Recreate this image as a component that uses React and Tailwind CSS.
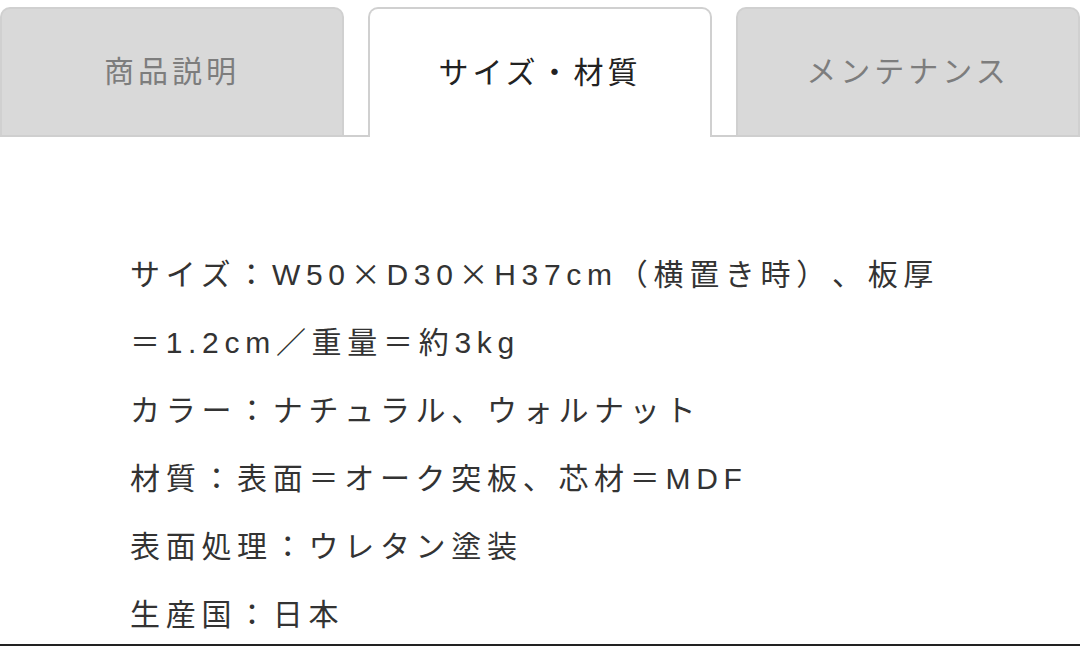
const tabs = [
  { label: '商品説明', active: false },
  { label: 'サイズ・材質', active: true },
  { label: 'メンテナンス', active: false },
];

const specs = [
  'サイズ：W50×D30×H37cm（横置き時）、板厚＝1.2cm／重量＝約3kg',
  'カラー：ナチュラル、ウォルナット',
  '材質：表面＝オーク突板、芯材＝MDF',
  '表面処理：ウレタン塗装',
  '生産国：日本',
];

// × should come from the CJK font (full width), like the original page
const SpecLine = ({ text }) => (
  <p>
    {text.split(/(×)/).map((part, i) =>
      part === '×' ? (
        <span key={i} style={{ fontFamily: '"Noto Sans CJK JP", sans-serif' }}>×</span>
      ) : (
        part
      )
    )}
  </p>
);

const App = () => {
  return (
    <div
      className="w-[1080px] h-[646px] bg-white overflow-hidden flex flex-col border-b-2 border-[#222] [text-spacing-trim:space-all]"
      style={{ fontFamily: '"Liberation Sans", "Noto Sans CJK JP", sans-serif' }}
    >
      {/* Tabs */}
      <div className="flex gap-[24px] pt-[7px] border-b-2 border-[#cfcfcf] h-[137px] shrink-0">
        {tabs.map((t) => (
          <div
            key={t.label}
            className={`flex-1 flex items-center justify-center rounded-t-[10px] border-2 border-b-0 border-[#d0d0d0] text-[30px] tracking-[4px] ${
              t.active
                ? 'bg-white -mb-[2px] text-[#222]'
                : 'bg-[#d9d9d9] text-[#7d7d7d]'
            }`}
          >
            <span className="-mt-[2px]">{t.label}</span>
          </div>
        ))}
      </div>

      {/* Spec list */}
      <div className="px-[130px] pt-[101px] text-[30px] leading-[68px] tracking-[5.7px] text-[#333]">
        {specs.map((s) => (
          <SpecLine key={s} text={s} />
        ))}
      </div>
    </div>
  );
};

export default App;
